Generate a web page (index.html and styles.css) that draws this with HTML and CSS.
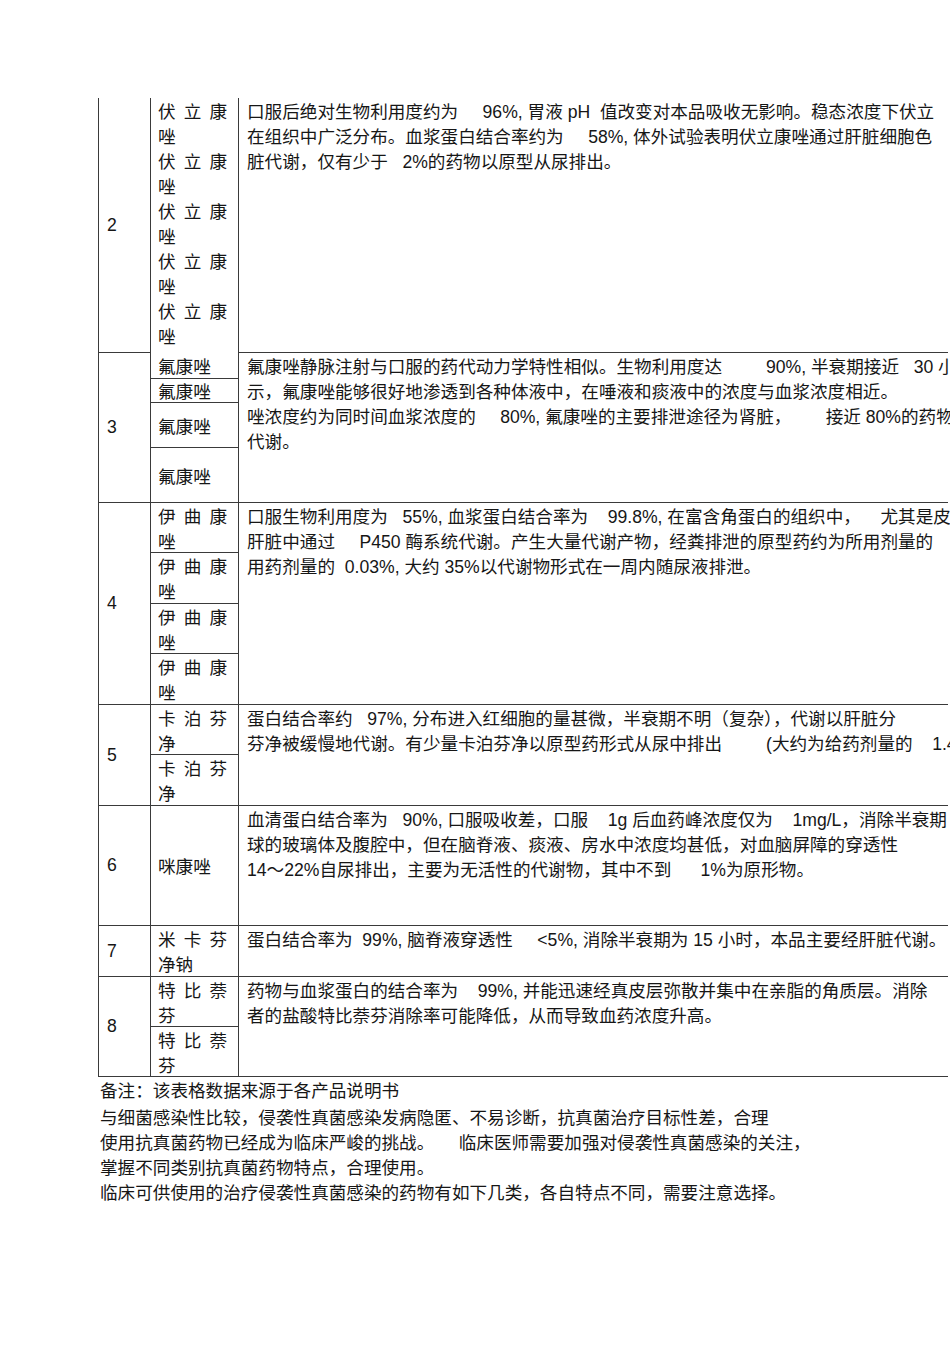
FILE: index.html
```html
<!DOCTYPE html>
<html lang="zh-CN">
<head>
<meta charset="utf-8">
<title>抗真菌药物药代动力学</title>
<link rel="stylesheet" href="styles.css">
</head>
<body>
<div class="page">
  <div class="tbl">
    <div class="row">
      <div class="c1">2</div>
      <div class="c2">
        <div class="sub first">
          <div class="nm">伏立康唑</div>
          <div class="nm">伏立康唑</div>
          <div class="nm">伏立康唑</div>
          <div class="nm">伏立康唑</div>
          <div class="nm">伏立康唑</div>
        </div>
      </div>
      <div class="c3">
        <div class="ln">口服后绝对生物利用度约为     96%, 胃液 pH  值改变对本品吸收无影响。稳态浓度下伏立</div>
        <div class="ln">在组织中广泛分布。血浆蛋白结合率约为     58%, 体外试验表明伏立康唑通过肝脏细胞色</div>
        <div class="ln">脏代谢，仅有少于   2%的药物以原型从尿排出。</div>
      </div>
    </div>

    <div class="row">
      <div class="c1">3</div>
      <div class="c2">
        <div class="sub mid h26"><div class="nm">氟康唑</div></div>
        <div class="sub mid h24"><div class="nm">氟康唑</div></div>
        <div class="sub mid h45"><div class="nm">氟康唑</div></div>
        <div class="sub mid h55"><div class="nm">氟康唑</div></div>
      </div>
      <div class="c3">
        <div class="ln">氟康唑静脉注射与口服的药代动力学特性相似。生物利用度达         90%, 半衰期接近   30 小</div>
        <div class="ln">示，氟康唑能够很好地渗透到各种体液中，在唾液和痰液中的浓度与血浆浓度相近。</div>
        <div class="ln">唑浓度约为同时间血浆浓度的     80%, 氟康唑的主要排泄途径为肾脏，       接近 80%的药物</div>
        <div class="ln">代谢。</div>
      </div>
    </div>

    <div class="row">
      <div class="c1">4</div>
      <div class="c2">
        <div class="sub h50"><div class="nm">伊曲康唑</div></div>
        <div class="sub h51"><div class="nm">伊曲康唑</div></div>
        <div class="sub h50"><div class="nm">伊曲康唑</div></div>
        <div class="sub h51"><div class="nm">伊曲康唑</div></div>
      </div>
      <div class="c3">
        <div class="ln">口服生物利用度为   55%, 血浆蛋白结合率为    99.8%, 在富含角蛋白的组织中，    尤其是皮</div>
        <div class="ln">肝脏中通过     P450 酶系统代谢。产生大量代谢产物，经粪排泄的原型药约为所用剂量的</div>
        <div class="ln">用药剂量的  0.03%, 大约 35%以代谢物形式在一周内随尿液排泄。</div>
      </div>
    </div>

    <div class="row">
      <div class="c1">5</div>
      <div class="c2">
        <div class="sub h50"><div class="nm">卡泊芬净</div></div>
        <div class="sub h51"><div class="nm">卡泊芬净</div></div>
      </div>
      <div class="c3">
        <div class="ln">蛋白结合率约   97%, 分布进入红细胞的量甚微，半衰期不明（复杂），代谢以肝脏分</div>
        <div class="ln">芬净被缓慢地代谢。有少量卡泊芬净以原型药形式从尿中排出         (大约为给药剂量的    1.4</div>
      </div>
    </div>

    <div class="row">
      <div class="c1">6</div>
      <div class="c2">
        <div class="sub mid h120"><div class="nm">咪康唑</div></div>
      </div>
      <div class="c3">
        <div class="ln">血清蛋白结合率为   90%, 口服吸收差，口服    1g 后血药峰浓度仅为    1mg/L，消除半衰期</div>
        <div class="ln">球的玻璃体及腹腔中，但在脑脊液、痰液、房水中浓度均甚低，对血脑屏障的穿透性</div>
        <div class="ln">14～22%自尿排出，主要为无活性的代谢物，其中不到      1%为原形物。</div>
      </div>
    </div>

    <div class="row">
      <div class="c1">7</div>
      <div class="c2">
        <div class="sub h51"><div class="nm">米卡芬净钠</div></div>
      </div>
      <div class="c3">
        <div class="ln">蛋白结合率为  99%, 脑脊液穿透性     &lt;5%, 消除半衰期为 15 小时，本品主要经肝脏代谢。</div>
      </div>
    </div>

    <div class="row">
      <div class="c1">8</div>
      <div class="c2">
        <div class="sub h50"><div class="nm">特比萘芬</div></div>
        <div class="sub h50"><div class="nm">特比萘芬</div></div>
      </div>
      <div class="c3">
        <div class="ln">药物与血浆蛋白的结合率为    99%, 并能迅速经真皮层弥散并集中在亲脂的角质层。消除</div>
        <div class="ln">者的盐酸特比萘芬消除率可能降低，从而导致血药浓度升高。</div>
      </div>
    </div>
  </div>

  <div class="notes">
    <div class="ln note-first">备注：该表格数据来源于各产品说明书</div>
    <div class="ln">与细菌感染性比较，侵袭性真菌感染发病隐匿、不易诊断，抗真菌治疗目标性差，合理</div>
    <div class="ln">使用抗真菌药物已经成为临床严峻的挑战。     临床医师需要加强对侵袭性真菌感染的关注，</div>
    <div class="ln">掌握不同类别抗真菌药物特点，合理使用。</div>
    <div class="ln">临床可供使用的治疗侵袭性真菌感染的药物有如下几类，各自特点不同，需要注意选择。</div>
  </div>
</div>
</body>
</html>
```

FILE: styles.css
```css
html, body {
  margin: 0;
  padding: 0;
  background: #ffffff;
  overflow: hidden;
}

body {
  width: 950px;
  height: 1345px;
  font-family: "Liberation Sans", "Noto Sans CJK SC", sans-serif;
  font-size: 17.6px;
  color: #161616;
}

.page {
  padding: 98px 0 0 98px;
}

.tbl {
  width: 850px;
}

.row {
  display: flex;
}

.c1 {
  width: 52px;
  box-sizing: border-box;
  border-left: 1px solid #3a3a3a;
  border-bottom: 1px solid #3a3a3a;
  display: flex;
  align-items: center;
  padding-left: 8px;
  line-height: 25px;
}

.c2 {
  width: 88px;
  box-sizing: border-box;
  border-left: 1px solid #3a3a3a;
  display: flex;
  flex-direction: column;
}

.sub {
  box-sizing: border-box;
  border-bottom: 1px solid #3a3a3a;
  padding: 0 11px 0 7px;
  font-family: "Noto Sans CJK SC", sans-serif;
  line-height: 25px;
  display: flex;
  flex-direction: column;
  justify-content: flex-start;
}

.sub.first {
  border-bottom: none;
  padding-bottom: 5px;
}

.sub.mid {
  justify-content: center;
}

.nm {
  text-align: justify;
  text-justify: inter-character;
}

.h24 { height: 24px; }
.h26 { height: 26px; }
.h45 { height: 45px; }
.h50 { height: 50px; }
.h51 { height: 51px; }
.h55 { height: 55px; }
.h120 { height: 120px; }

.c3 {
  width: 710px;
  box-sizing: border-box;
  border-left: 1px solid #3a3a3a;
  border-bottom: 1px solid #3a3a3a;
  padding-left: 8px;
}

.ln {
  height: 25px;
  white-space: pre;
}

.notes {
  padding-left: 2px;
}

.note-first {
  margin-bottom: 2px;
}
```
